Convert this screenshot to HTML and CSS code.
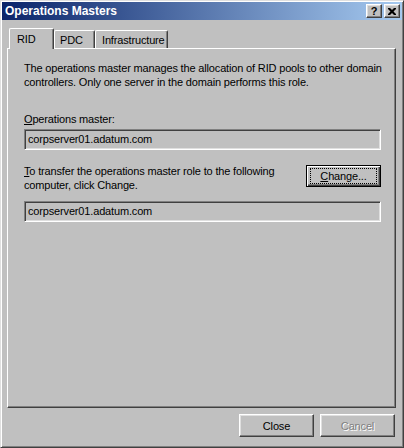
FILE: index.html
```html
<!DOCTYPE html>
<html lang="en">
<head>
  <meta charset="UTF-8">
  <title>Operations Masters</title>
  <link rel="stylesheet" href="styles.css">
</head>
<body>
  <div class="window">
    <div class="titlebar">
      <span class="title">Operations Masters</span>
      <div class="caption-buttons">
        <span class="cap-btn">?</span>
        <span class="cap-btn">
          <svg width="8" height="7" viewBox="0 0 8 7">
            <path d="M0 0h2l2 2 2-2h2v1l-2.5 2.5L8 6v1H6L4 5 2 7H0V6l2.5-2.5L0 1z" fill="#000"/>
          </svg>
        </span>
      </div>
    </div>

    <div class="tabs">
      <span class="tab active">RID</span>
      <span class="tab pdc">PDC</span>
      <span class="tab infra">Infrastructure</span>
    </div>

    <div class="panel">
      <p class="desc">The operations master manages the allocation of RID pools to other domain<br>controllers. Only one server in the domain performs this role.</p>

      <label class="label"><u>O</u>perations master:</label>
      <div class="field">corpserver01.adatum.com</div>

      <div class="transfer">
        <p><u>T</u>o transfer the operations master role to the following<br>computer, click Change.</p>
        <button class="btn default"><span class="focus"><u>C</u>hange...</span></button>
      </div>
      <div class="field second">corpserver01.adatum.com</div>
    </div>

    <div class="footer">
      <button class="btn">Close</button>
      <button class="btn" disabled>Cancel</button>
    </div>
  </div>
</body>
</html>
```

FILE: styles.css
```css
body {
  margin: 0;
  background: #c0c0c0;
  font-family: "Liberation Sans", Arial, sans-serif;
  font-size: 11px;
  letter-spacing: -0.16px;
  color: #000;
}
.window {
  width: 404px;
  height: 448px;
  box-sizing: border-box;
  padding: 1px;
  display: flex;
  flex-direction: column;
  background: #c0c0c0;
  border: 1px solid;
  border-color: #dfdfdf #404040 #404040 #dfdfdf;
  box-shadow: inset 1px 1px #fff, inset -1px -1px #808080;
}
.titlebar {
  height: 18px;
  display: flex;
  align-items: center;
  justify-content: space-between;
  padding: 0 2px 0 3px;
  background: linear-gradient(to right, #0a246a, #a6caf0);
}
.title {
  color: #fff;
  font-weight: bold;
  font-size: 12px;
  letter-spacing: 0;
}
.caption-buttons {
  display: flex;
  gap: 2px;
}
.cap-btn {
  width: 16px;
  height: 14px;
  box-sizing: border-box;
  display: flex;
  align-items: center;
  justify-content: center;
  background: #c0c0c0;
  border: 1px solid;
  border-color: #fff #404040 #404040 #fff;
  box-shadow: inset -1px -1px #808080, inset 1px 1px #dfdfdf;
  font-weight: bold;
  font-size: 11px;
  line-height: 12px;
}
.tabs {
  height: 20px;
  margin: 8px 6px 0 5px;
  padding-left: 2px;
  display: flex;
  align-items: flex-end;
  position: relative;
  z-index: 1;
}
.tab {
  height: 18px;
  box-sizing: border-box;
  padding: 2px 0 0 5px;
  line-height: 14px;
  border: 1px solid #fff;
  border-bottom: none;
  border-right-color: #404040;
  border-radius: 2px 2px 0 0;
  box-shadow: inset -1px 0 #808080;
}
.tab.active {
  width: 45px;
  height: 21px;
  margin-bottom: -1px;
  padding: 3px 0 0 7px;
  background: #c0c0c0;
}
.tab.pdc {
  width: 41px;
}
.tab.infra {
  width: 73px;
  padding-left: 6px;
}
.panel {
  flex: 1;
  margin: 0 6px 0 5px;
  padding: 12px 14px 0 16px;
  border: 1px solid;
  border-color: #fff #404040 #404040 #fff;
  box-shadow: inset -1px -1px #808080;
}
.desc {
  margin: 0;
  line-height: 14px;
  white-space: nowrap;
}
.label {
  display: block;
  margin-top: 23px;
  line-height: 14px;
}
.field {
  margin-top: 3px;
  height: 21px;
  box-sizing: border-box;
  padding-left: 3px;
  line-height: 19px;
  border: 1px solid;
  border-color: #808080 #fff #fff #808080;
  box-shadow: inset 1px 1px #404040, inset -1px -1px #dfdfdf;
}
.field.second {
  margin-top: 9px;
}
.transfer {
  margin-top: 14px;
  display: flex;
  justify-content: space-between;
  align-items: flex-start;
}
.transfer p {
  margin: 0;
  line-height: 14px;
  white-space: nowrap;
}
.btn {
  width: 75px;
  height: 23px;
  box-sizing: border-box;
  padding: 0;
  font: inherit;
  letter-spacing: inherit;
  color: #000;
  background: #c0c0c0;
  border: 1px solid;
  border-color: #fff #404040 #404040 #fff;
  box-shadow: inset -1px -1px #808080, inset 1px 1px #dfdfdf;
}
.btn:disabled {
  color: #808080;
  text-shadow: 1px 1px #fff;
}
.btn.default {
  height: 22px;
  margin-top: 1px;
  padding: 2px 3px;
  display: flex;
  border-color: #000;
  box-shadow: inset 1px 1px #fff, inset -1px -1px #404040, inset -2px -2px #808080;
}
.focus {
  flex: 1;
  line-height: 14px;
  border: 1px dotted #000;
}
.footer {
  height: 38px;
  box-sizing: border-box;
  padding: 6px 7px 0 0;
  display: flex;
  justify-content: flex-end;
  gap: 6px;
}
```
